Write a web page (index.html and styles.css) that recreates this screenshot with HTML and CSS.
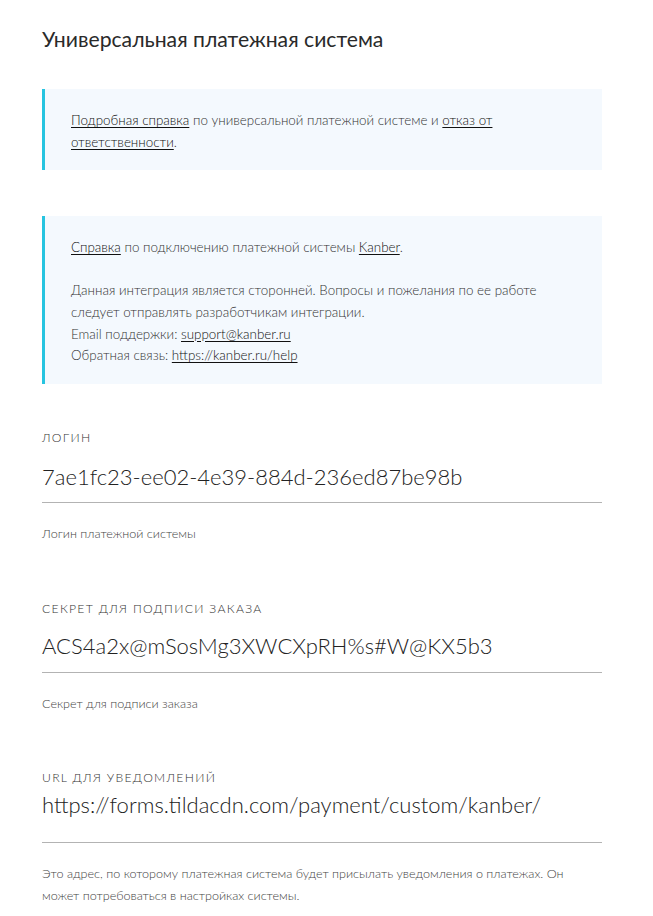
FILE: index.html
```html
<!DOCTYPE html>
<html lang="ru">
<head>
<meta charset="utf-8">
<title>Универсальная платежная система</title>
<link rel="stylesheet" href="styles.css">
</head>
<body>
<div class="page">
  <h1 class="title">Универсальная платежная система</h1>

  <div class="note note-first">
    <p><a href="#">Подробная справка</a> по универсальной платежной системе и <a href="#">отказ от ответственности</a>.</p>
  </div>

  <div class="note note-second">
    <p><a href="#">Справка</a> по подключению платежной системы <a href="#">Kanber</a>.</p>
    <p class="gap">Данная интеграция является сторонней. Вопросы и пожелания по ее работе следует отправлять разработчикам интеграции.<br>
    Email поддержки: <a href="#">support@kanber.ru</a><br>
    Обратная связь: <a href="#">https://kanber.ru/help</a></p>
  </div>

  <div class="field field-login">
    <div class="label">Логин</div>
    <div class="value">7ae1fc23-ee02-4e39-884d-236ed87be98b</div>
    <div class="help">Логин платежной системы</div>
  </div>

  <div class="field field-secret">
    <div class="label">Секрет для подписи заказа</div>
    <div class="value">ACS4a2x@mSosMg3XWCXpRH%s#W@KX5b3</div>
    <div class="help">Секрет для подписи заказа</div>
  </div>

  <div class="field field-url">
    <div class="label">URL для уведомлений</div>
    <div class="value value-url">https://forms.tildacdn.com/payment/custom/kanber/</div>
    <div class="help">Это адрес, по которому платежная система будет присылать уведомления о платежах. Он может потребоваться в настройках системы.</div>
  </div>
</div>
</body>
</html>
```

FILE: styles.css
```css
html, body {
  margin: 0;
  padding: 0;
  background: #ffffff;
}

body {
  font-family: Lato, "Noto Sans", "Liberation Sans", sans-serif;
  color: #222222;
}

.page {
  width: 560px;
  padding: 23px 0 0 42px;
}

.title {
  margin: 0;
  font-size: 21.2px;
  font-weight: 400;
  line-height: 32px;
  color: #2a2a2a;
}

.note {
  background: #f4f9fe;
  border-left: 3px solid #26c4e0;
  padding: 21px 28px 17px 26px;
  font-size: 13.4px;
  line-height: 21.6px;
  font-weight: 300;
  color: #333333;
}

.note p {
  margin: 0;
}

.note p.gap {
  margin-top: 21.6px;
}

.note a {
  color: #111111;
  text-decoration: underline;
  text-underline-offset: 2px;
}

.note-first {
  margin-top: 34px;
}

.note-second {
  margin-top: 46px;
}

.field {
  margin-top: 46px;
}

.field-secret {
  margin-top: 56px;
}

.field-url {
  margin-top: 55px;
}

.label {
  font-size: 12.2px;
  line-height: 16px;
  text-transform: uppercase;
  letter-spacing: 1.3px;
  color: #333333;
  font-weight: 300;
}

.value {
  font-size: 22px;
  font-weight: 300;
  line-height: 30px;
  color: #222222;
  padding: 16px 0 10px;
  border-bottom: 1px solid #b3b3b3;
}

.field-secret .value {
  padding: 14px 0 11px;
}

.value-url {
  padding: 4px 0 22px;
}

.help {
  margin-top: 20px;
  font-size: 12.6px;
  line-height: 22px;
  font-weight: 300;
  color: #444444;
}
```
